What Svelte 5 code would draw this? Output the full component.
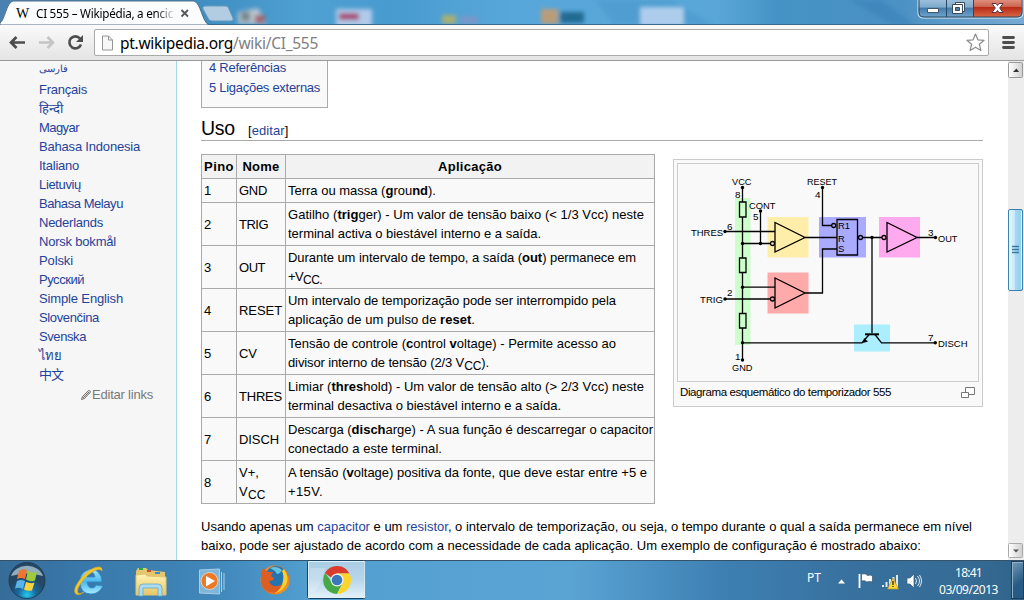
<script>
  // Spreads a run of text over a known width with letter spacing.
  function fit(node, width) {
    const natural = node.getBoundingClientRect().width;
    const count = [...node.textContent].length;
    node.style.letterSpacing = `${(width - natural) / count}px`;
  }

  const languages = [
    ['فارسی', 26], ['Français', 48], ['हिन्दी', 24], ['Magyar', 40],
    ['Bahasa Indonesia', 101], ['Italiano', 40], ['Lietuvių', 42],
    ['Bahasa Melayu', 84], ['Nederlands', 64], ['Norsk bokmål', 77],
    ['Polski', 34], ['Русский', 45], ['Simple English', 84],
    ['Slovenčina', 60], ['Svenska', 47], ['ไทย', 22], ['中文', 24]
  ];

  // Each line is [width, ...segments]; segments starting with * are bold, with _ are subscript.
  const rows = [
    ['1', ['GND'], [[148, 'Terra ou massa (', '*g', 'rou', '*nd', ').']]],
    ['2', ['TRIG'], [[356, 'Gatilho (', '*trig', 'ger) - Um valor de tensão baixo (< 1/3 Vcc) neste'], [253, 'terminal activa o biestável interno e a saída.']]],
    ['3', ['OUT'], [[348, 'Durante um intervalo de tempo, a saída (', '*out', ') permanece em'], [34, '+V', '_CC.']]],
    ['4', ['RESET'], [[328, 'Um intervalo de temporização pode ser interrompido pela'], [187, 'aplicação de um pulso de ', '*reset', '.']]],
    ['5', ['CV'], [[328, 'Tensão de controle (', '*c', 'ontrol ', '*v', 'oltage) - Permite acesso ao'], [201, 'divisor interno de tensão (2/3 V', '_CC', ').']]],
    ['6', ['THRES'], [[356, 'Limiar (', '*thres', 'hold) - Um valor de tensão alto (> 2/3 Vcc) neste'], [273, 'terminal desactiva o biestável interno e a saída.']]],
    ['7', ['DISCH'], [[365, 'Descarga (', '*disch', 'arge) - A sua função é descarregar o capacitor'], [154, 'conectado a este terminal.']]],
    ['8', ['V+,', 'V'], [[359, 'A tensão (', '*v', 'oltage) positiva da fonte, que deve estar entre +5 e'], [35, '+15V.']]]
  ];
  const nameWidths = { GND: 28, TRIG: 29, OUT: 26, RESET: 43, CV: 18, THRES: 43, DISCH: 40, 'V+,': 20, V: 9 };
</script>

<div class="screen">
  <header class="titlebar">
    <svg class="glass" width="1024" height="25">
      <defs>
        <linearGradient id="sky"><stop offset="0" stop-color="#4b81b0"/><stop offset=".18" stop-color="#3c8bc0"/><stop offset=".3" stop-color="#4fa0d3"/><stop offset=".38" stop-color="#489bcf"/><stop offset=".5" stop-color="#58a7da"/><stop offset=".7" stop-color="#5aa6d8"/><stop offset=".76" stop-color="#4593c6"/><stop offset=".88" stop-color="#4b91c4"/><stop offset="1" stop-color="#78aad2"/></linearGradient>
        <filter id="soft" x="-30%" y="-60%" width="160%" height="220%"><feGaussianBlur stdDeviation="2.2"/></filter>
      </defs>
      <rect width="1024" height="25" fill="url(#sky)"/>
      <path d="M595 0h75l45 25H615z" fill="#3f90c5" opacity=".35" filter="url(#soft)"/>
      <path d="M850 0h30l35 25h-22z" fill="#347fb6" opacity=".5" filter="url(#soft)"/>
      <g filter="url(#soft)">
        <path d="M238 12l20-4 9 16h-29z" fill="#b8c4cd"/><path d="M241 12h9v9h-9z" fill="#77858c"/><path d="M255 15h10v8h-10z" fill="#a16470"/>
        <path d="M336 9h36v18h-36z" fill="#b1cbe9"/><path d="M339 13h20v7h-20z" fill="#a64776"/>
        <path d="M442 15h14v9h-14z" fill="#a8af72"/><path d="M460 16h18v8h-18z" fill="#7798c9"/>
        <path d="M541 9h17v15h-17z" fill="#bb9c79"/><path d="M560 12h24v11h-24z" fill="#236b93"/>
        <path d="M640 7h44v19h-44z" fill="#aecdec"/>
      </g>
      <path d="M0 24.5h1024" stroke="#3c6685"/>
      <path d="M0 25V23C5 20 6 3 13 1h181c7 2 8 21 15 24z" fill="#fbfcfd" stroke="#526f87"/>
      <path d="M203 9q-1-3 3-3h20q2 0 3 3l4 9q1 3-2 3h-19q-3 0-4-3z" fill="#b2cce2" stroke="#6799be"/>
      <path d="M61.500 10l6.500 6.500m0-6.500l-6.500 6.500" transform="translate(120 0)" stroke="#555" stroke-width="1.8"/>
    </svg>
    <div class="tab"><span class="w">W</span><span class="tabtitle"><span class="run" use:fit={137}>CI 555 – Wikipédia, a encic</span></span></div>
    <svg class="windowbuttons" width="107" height="20">
      <defs>
        <linearGradient id="winblue" x2="0" y2="1"><stop stop-color="#a4c5df"/><stop offset=".46" stop-color="#7fa9ca"/><stop offset=".5" stop-color="#427bab"/><stop offset="1" stop-color="#74a8d0"/></linearGradient>
        <linearGradient id="winred" x2="0" y2="1"><stop stop-color="#e59a8c"/><stop offset=".45" stop-color="#cc6652"/><stop offset=".5" stop-color="#b92b17"/><stop offset="1" stop-color="#d86846"/></linearGradient>
      </defs>
      <path d="M1-2V13q0 5 5 5h95q5 0 5-5V-2z" fill="url(#winblue)" stroke="#dcecf6"/>
      <path d="M57-2H104V12q0 5-5 5H57z" fill="url(#winred)"/>
      <path d="M2-2V12q0 5 5 5h93q5 0 5-5V-2M29.5 0v17M56.5 0v17" fill="none" stroke="#29475f"/>
      <path d="M10.5 8.500h11v4h-11z" fill="#fff" stroke="#45566a"/>
      <path d="M38.500 2.500h9v9h-9z" fill="#fff" stroke="#39485a"/><path d="M35.500 4.500h10v9h-10z" fill="#fff" stroke="#39485a"/><path d="M38.500 7.500h4v3h-4z" fill="#507fab" stroke="#39485a"/>
      <path d="M75 3.500h4l1.500 2 1.500-2h4l-3.300 4.500 3.300 4.500h-4l-1.500-2-1.500 2h-4l3.300-4.500z" fill="#fff" stroke="#5a3540"/>
    </svg>
  </header>

  <nav class="toolbar">
    <svg class="nav" width="92" height="35">
      <path d="M16.5 12L11 17.5l5.500 5.500M11.500 17.500H25" fill="none" stroke="#4d4d4d" stroke-width="2.7"/>
      <path d="M47.500 12L53 17.500 47.500 23M39 17.500h13.500" fill="none" stroke="#c4c4c4" stroke-width="2.500"/>
      <path d="M80 13.500A6 6 0 1 0 81 19.500" fill="none" stroke="#4d4d4d" stroke-width="2.600"/><path d="M83 10v7h-7z" fill="#4d4d4d"/>
    </svg>
    <div class="address">
      <svg width="15" height="18"><path d="M2.500 2h6l4 4v10h-10zM8.500 2v4h4" fill="#f7f7f7" stroke="#949494"/></svg>
      <span class="url"><span class="run" use:fit={198}>pt.wikipedia.org<i>/wiki/CI_555</i></span></span>
      <svg class="star" width="21" height="21"><path d="M10.500 2l2.400 5.800 6.200.5-4.700 4 1.500 6.200-5.400-3.300-5.400 3.300 1.500-6.200-4.700-4 6.200-.5z" fill="#fff" stroke="#8b8b8b" stroke-width="1.200" stroke-linejoin="round"/></svg>
    </div>
    <svg class="menu" width="15" height="15"><path d="M2.500 2.500h10M2.500 7.500h10M2.500 12.500h10" stroke="#4e4e4e" stroke-width="2.800" stroke-linecap="round"/></svg>
  </nav>

  <main class="page">
    <aside>
      <ul>{#each languages as [name, width], i}<li class:persian={i === 0}><a><span class="run" use:fit={width}>{name}</span></a></li>{/each}</ul>
      <div class="editlinks"><svg width="12" height="12"><path d="M1.500 10.500L2.500 7.500 8.500 1.500Q10 1 10.500 3L4.500 9.500zM2.500 7.500l2 2M7.500 2.500l2 2M3.500 8.500l5-5" fill="#ddd" stroke="#777"/></svg><span class="run" use:fit={61}>Editar links</span></div>
    </aside>
    <article>
      <div class="toc"><a><span class="run" use:fit={77}>4 Referências</span></a><a><span class="run" use:fit={111}>5 Ligações externas</span></a></div>
      <h2><span class="run" use:fit={34}>Uso</span><small>[<a><span class="run" use:fit={33}>editar</span></a>]</small></h2>
      <div class="body">
        <table>
          <colgroup><col class="c1" /><col class="c2" /><col class="c3" /></colgroup>
          <thead><tr><th><span class="run" use:fit={30}>Pino</span></th><th><span class="run" use:fit={37}>Nome</span></th><th><span class="run" use:fit={64}>Aplicação</span></th></tr></thead>
          <tbody>
            {#each rows as [pin, names, lines]}
              <tr>
                <td>{pin}</td>
                <td>{#each names as name}<div class="line"><span class="run" use:fit={nameWidths[name]}>{name}</span>{#if name === 'V'}<sub>CC</sub>{/if}</div>{/each}</td>
                <td>{#each lines as [width, ...parts]}<div class="line"><span class="run" use:fit={width}>{#each parts as part}{#if part[0] === '*'}<b>{part.slice(1)}</b>{:else if part[0] === '_'}<sub>{part.slice(1)}</sub>{:else}{part}{/if}{/each}</span></div>{/each}</td>
              </tr>
            {/each}
          </tbody>
        </table>
        <figure>
          <svg class="schematic" width="302" height="219" viewBox="677 163 302 219">
            <rect x="677.5" y="163.500" width="301" height="218" fill="#f9f9f9" stroke="#ccc"/>
            <path d="M735 198h15.500v147H735z" fill="#cfc"/><path d="M767.500 217h41v40.500h-41z" fill="#fea"/><path d="M767.500 272.500h41v41h-41z" fill="#faa"/>
            <path d="M819 217h47v40.500h-47z" fill="#aaf"/><path d="M879 217h41v40.500h-41z" fill="#fae"/><path d="M854 324.500h36v27h-36z" fill="#aef"/>
            <g fill="none" stroke="#000" stroke-width="1.300">
              <path d="M742.500 187.500V202M742.500 217v41M742.500 272v41.500M742.500 328v32M739.500 202h6.500v15h-6.500zM739.500 258h6.500v14.500h-6.500zM739.500 313.500h6.500V328h-6.500z"/>
              <path d="M725 231.500h50M742.500 243.500h28M760.500 211v32.500M775 222.500v29.500l30-14.500zM805 237.500h32M742.500 287.200h32.500M725 299h45.500M775 278v30l30-15zM805 293h17.500v-44H837"/>
              <path d="M822.500 187.500v38h9M837 219.500h20.500V255H837zM863 237.500h19M887 222.500v29.500l30-14.500zM917 237.500h18.500M872 237.500V333M742.500 342.800H862l7-8M875 334.500l6.500 8.300h54"/>
              <circle cx="772.500" cy="243.500" r="2"/><circle cx="772.500" cy="299" r="2"/><circle cx="833.700" cy="225.500" r="2"/><circle cx="860.500" cy="237.500" r="2"/><circle cx="884" cy="237.500" r="2"/>
            </g>
            <path d="M865 334.300h14" stroke="#000" stroke-width="2"/><path d="M863 343l1-5 4 3.500z"/>
            {#each [[742.5,187.5],[760.5,211],[725,231.5],[742.5,243.5],[760.5,243.5],[822.5,187.5],[872,237.5],[935.5,237.5],[742.5,287.2],[725,299],[742.5,342.8],[742.5,360],[935.3,342.8]] as [x, y]}<circle cx={x} cy={y} r="1.700"/>{/each}
            {#each [['VCC',732,185,19.5],['8',735,197.5,5.5],['CONT',749,208.5,26.5],['5',753,220,5.5],['THRES',691,235.5,32],['6',727,229.5,5.5],['RESET',807,185,30],['4',815,197.5,5.5],['R1',838,229,12],['R',838,241.5,6.7],['S',838,252,6.3],['3',928,235.5,5.5],['OUT',938,241.5,19.5],['TRIG',700,302.5,23],['2',727,296,5.5],['1',735,359.5,5.5],['GND',732,371.3,20.5],['7',928,340.5,5.5],['DISCH',938,346.5,29.5]] as [label, x, y, width]}<text {x} {y} textLength={width} lengthAdjust="spacingAndGlyphs">{label}</text>{/each}
          </svg>
          <figcaption><span class="run" use:fit={211}>Diagrama esquemático do temporizador 555</span><svg width="15" height="12"><path d="M4.500 .5h9v7h-9z" fill="#fff" stroke="#777"/><path d="M.5 5.500h7v5h-7z" fill="#fff" stroke="#777"/></svg></figcaption>
        </figure>
      </div>
      <p><span class="run" use:fit={771}>Usando apenas um <a>capacitor</a> e um <a>resistor</a>, o intervalo de temporização, ou seja, o tempo durante o qual a saída permanece em nível</span><br /><span class="run" use:fit={720}>baixo, pode ser ajustado de acordo com a necessidade de cada aplicação. Um exemplo de configuração é mostrado abaixo:</span></p>
    </article>
    <div class="scroll">
      <svg width="16" height="499" viewBox="1008 61 16 499">
        <defs><linearGradient id="thumb"><stop stop-color="#e9f7fd"/><stop offset=".42" stop-color="#c9eafa"/><stop offset=".5" stop-color="#a3d9f3"/><stop offset="1" stop-color="#8dccec"/></linearGradient><linearGradient id="btn"><stop stop-color="#fff"/><stop offset="1" stop-color="#cfcfcf"/></linearGradient></defs>
        <rect x="1008" y="61" width="16" height="499" fill="#ededed"/>
        <rect x="1008.500" y="62.500" width="14" height="15" rx="1" fill="url(#btn)" stroke="#999"/><path d="M1013 72l3.500-3.500 2.500 3.500z" fill="#333"/>
        <rect x="1008.500" y="543.500" width="14" height="14" rx="1" fill="url(#btn)" stroke="#aaa"/><path d="M1013 549.500h6l-3 3z" fill="#555"/>
        <rect x="1008.500" y="209.500" width="14" height="81" rx="1.500" fill="url(#thumb)" stroke="#3b81ae"/><path d="M1009.500 211v78M1021.500 211v78" stroke="#e2f6ff"/>
        <path d="M1012 246.500h7M1012 249.500h7M1012 252.500h7" stroke="#36799c" stroke-width="1.500"/>
      </svg>
    </div>
  </main>

  <footer>
    <svg class="apps" width="400" height="40" viewBox="0 560 400 40">
      <defs>
        <radialGradient id="orb" cy=".9"><stop stop-color="#27c9ee"/><stop offset=".5" stop-color="#176a9f"/><stop offset="1" stop-color="#244863"/></radialGradient>
        <linearGradient id="ie" x2="0" y2="1"><stop stop-color="#a8e7ff"/><stop offset=".5" stop-color="#49b7ec"/><stop offset="1" stop-color="#a7eaff"/></linearGradient>
        <linearGradient id="folder" x2="0" y2="1"><stop stop-color="#fff3b3"/><stop offset="1" stop-color="#e8c668"/></linearGradient>
        <linearGradient id="fox" x2="1" y2="1"><stop stop-color="#f3a341"/><stop offset=".5" stop-color="#e4651d"/><stop offset="1" stop-color="#f6a823"/></linearGradient>
        <linearGradient id="active" x2="0" y2="1"><stop stop-color="#a9cde6"/><stop offset=".5" stop-color="#b7d6e9"/><stop offset="1" stop-color="#e4f2fa"/></linearGradient>
      </defs>
      <circle cx="27" cy="580.500" r="18" fill="url(#orb)" stroke="#233e54"/><path d="M11 576a16.500 13.500 0 0 1 32 0q-16-5-32 0z" fill="#cde2ee" opacity=".65"/>
      <path d="M19 571q4-3 8-.5l-2 8.500q-4-2-8 0z" fill="#ef762f"/><path d="M28 571q5 3 9 1l-2 8.500q-4 2-9-1z" fill="#9dcb3b"/><path d="M17 581q4-2 8 0l-2 8q-4-2-8-.5z" fill="#58b4eb"/><path d="M26 582q5 2 8.500.5l-2.500 8q-4 1-8-1z" fill="#fbd33e"/>
      <path fill-rule="evenodd" d="M103 586q-4 8-12 8-10 0-11-11-.5-9 6-12 7-4 12 1 4 4 4 10H87q1 6 5 6 3 0 4-3zM87 577h8q-1-5-4-5-3 0-4 5z" fill="url(#ie)" stroke="#2b8bc6" stroke-width=".8"/>
      <path d="M76 594q-4-3 3-13 7-10 15-13 9-3 8 3-2-3-8 0-8 4-13 12-5 7-3 10 2 2 6-1-5 4-8 2z" fill="#f5c72c" stroke="#dcaa21" stroke-width=".7"/>
      <path d="M136 571l2-3h8l2 2 17 2v22h-29z" fill="#e4c570"/><path d="M136 575l9-1 2 2 19 1v18h-30z" fill="url(#folder)" stroke="#e1c56f"/><path d="M139 569h4" stroke="#27a94d" stroke-width="2"/><path d="M147 571h4" stroke="#d2492c" stroke-width="2"/><path d="M155 573h5" stroke="#3790cb" stroke-width="2"/>
      <path d="M139 596v-8q0-4 4-4h15q4 0 4 4v8h-4v-8h-15v8z" fill="#a9dbf1" stroke="#68a8c7" stroke-width=".8"/>
      <path d="M199.500 570l20-1v25l-20-1z" fill="#80b6da" stroke="#a6cfe5"/><path d="M221.500 572v20M224 573v17" stroke="#a8d3eb"/><circle cx="209.500" cy="581" r="8.500" fill="#ee7824" stroke="#d7d7c9"/><path d="M206 576l9 5-9 5.500z" fill="#fff"/>
      <circle cx="275" cy="580" r="14.500" fill="url(#fox)"/><circle cx="276" cy="576.500" r="10.500" fill="#2573af"/><path d="M270 568q7-3 12 2-2 4-5 4l-2-3z" fill="#66c3dd"/><path d="M284 569q6 8 2 16-5 8-13 8 9-4 10-12 1-6-1-10z" fill="#f7cf32"/><path d="M261 573l2-5 5 4 5 0-2 4 3 2q0 3-5 3 2 6 8 5 3 0 5-2-2 7-8 9-9-1-13-9z" fill="#dc5e22"/>
      <rect x="307.500" y="560.500" width="58" height="38" rx="2" fill="url(#active)" stroke="#194366"/><path d="M308.500 598V561.500H365v36h-56.500" fill="none" stroke="#e1f0f8"/><path d="M314 592q7-5 11-24h-15v24z" fill="#fff" opacity=".2"/>
      <path d="M324.900 573A14 14 0 0 1 349.500 573.500H337l-6 4z" fill="#d93b2d"/><path d="M325 573a14 14 0 0 0 12 21l5-10-7 2z" fill="#46a846"/><path d="M337 573.500h12.500A14 14 0 0 1 337 594l6-11z" fill="#fbd52d"/><circle cx="337" cy="580" r="6.500" fill="#f6f6ee"/><circle cx="337" cy="580" r="5.300" fill="#3979bb"/>
    </svg>
    <div class="tray">
      <span class="pt"><span class="run" use:fit={14}>PT</span></span>
      <svg width="94" height="40" viewBox="832 560 94 40">
        <path d="M838 583.500l3.500-4 3.500 4z" fill="#fff"/>
        <path d="M859.500 574v14" stroke="#fff" stroke-width="1.800"/><path d="M861.500 574q5-1 6 1.500 3-1 5 .5v6q-3-1-6 0-1-2-5-1z" fill="#fff" stroke="#34536b" stroke-width=".7"/>
        <path d="M883 587v-2M886.500 587v-5M890 587v-8M893.500 587v-10M897 587v-12" stroke="#dae9f2" stroke-width="2"/><path d="M893 578l5.500 11h-11z" fill="#ffd93c" stroke="#b99720" stroke-width=".7"/><path d="M893 581v4m0 1v1" stroke="#222" stroke-width="1.300"/>
        <path d="M907 578h3l4-4v14l-4-4h-3z" fill="#fff" stroke="#3b5b72" stroke-width=".7"/><path d="M915.500 578q2 3 0 6M917.500 576q4 5 0 10M919.500 575q4 6 0 12" stroke="#dceaf2" fill="none"/>
      </svg>
      <div class="clock"><span class="run" use:fit={27}>18:41</span><span class="run" use:fit={59}>03/09/2013</span></div>
      <div class="peek"></div>
    </div>
  </footer>
</div>

<style>
  :global(body) { margin: 0; overflow: hidden; }
  * { box-sizing: border-box; }
  svg { display: block; flex: none; }
  .screen { width: 1024px; height: 600px; display: flex; flex-direction: column; overflow: hidden; position: relative; background: #fff; font: 13px/19px "Liberation Sans", "Noto Sans CJK SC", sans-serif; color: #000; }
  .run { display: inline-block; white-space: pre; }
  .titlebar { height: 25px; flex: none; position: relative; }
  .glass { position: absolute; inset: 0; }
  .tab { position: relative; display: flex; padding: 4px 0 0 16px; font: 11.700px/18px "Noto Sans", sans-serif; }
  .w { width: 20px; font: 14px/19px "Liberation Serif", serif; }
  .tabtitle { width: 140px; mask-image: linear-gradient(90deg, #000 120px, transparent 140px); }
  .windowbuttons { position: absolute; top: 0; right: 0; }
  .toolbar { height: 36px; flex: none; display: flex; align-items: flex-start; background: linear-gradient(#fafafa, #e4e4e4); border-bottom: 1px solid #999; }
  .nav { width: 94px; }
  .address { width: 895px; height: 27px; margin-top: 4px; border: 1px solid #aaa; border-radius: 2px; background: #fff; display: flex; align-items: center; padding: 0 1px 0 5px; }
  .url { flex: 1; padding-left: 5px; font: 15.500px/24px "Noto Sans", sans-serif; }
  .url i { font-style: normal; color: #808080; }
  .star { margin-right: 1px; }
  .menu { margin: 10px 0 0 12px; }
  .page { height: 499px; flex: none; display: flex; overflow: hidden; }
  a { color: #1f439b; }
  aside { width: 177px; flex: none; background: #f6f6f6; border-right: 1px solid #a7d7e8; }
  ul { list-style: none; margin: 0; padding: 0 0 0 39px; }
  li { height: 19px; line-height: 19px; white-space: nowrap; }
  li a { display: block; height: 19px; }
  .persian { font-size: 9.500px; line-height: 16px; }
  .editlinks { display: flex; align-items: center; padding-left: 80px; height: 19px; margin-top: 1px; color: #797979; }
  article { width: 831px; flex: none; padding-left: 24px; }
  .toc { width: 127px; height: 47px; border: 1px solid #aaa; border-top: 0; background: #f9f9f9; padding: 0 0 0 7px; line-height: 20px; display: flex; flex-direction: column; justify-content: flex-start; }
  .toc a { height: 20px; margin-top: -3px; } .toc a + a { margin-top: 0; }
  h2 { width: 782px; height: 26px; margin: 7px 0 13px; border-bottom: 1px solid #aaa; font: 19.500px/26px "Liberation Sans", sans-serif; display: flex; align-items: baseline; }
  small { font-size: 13px; line-height: 20px; margin-left: 13px; }
  .body { display: flex; align-items: flex-start; justify-content: space-between; width: 782px; }
  table { width: 454px; flex: none; table-layout: fixed; border-collapse: collapse; background: #f9f9f9; }
  .c1 { width: 35px; } .c2 { width: 49px; } .c3 { width: 369px; }
  th, td { border: 1px solid #aaa; padding: 2px; text-align: left; white-space: nowrap; line-height: 19px; }
  th { background: #f2f2f2; text-align: center; }
  .line { height: 19px; }
  sub { font-size: 12px; line-height: 0; vertical-align: -3px; }
  figure { margin: 5px 0 0; width: 310px; height: 248px; background: #f9f9f9; border: 1px solid #ccc; padding: 3px; }
  .schematic text { font-size: 9.500px; }
  figcaption { display: flex; justify-content: space-between; align-items: center; padding: 1px 3px 0; font-size: 11.500px; }
  p { margin: 13px 0 0; }
  .scroll { width: 16px; flex: none; }
  footer { height: 40px; flex: none; display: flex; justify-content: space-between; color: #fff; background: linear-gradient(90deg, #366c98 0, #3978aa 80px, #4188bb 220px, #529fd0 310px, #5aa4d4 570px, #3e80b3 720px, #38719f 850px, #356b94 970px, #306389); box-shadow: inset 0 1px #35526b; }
  .tray { width: 217px; display: flex; font: 12px/17px "Noto Sans", sans-serif; }
  .pt { width: 25px; padding-top: 9px; }
  .clock { width: 85px; display: flex; flex-direction: column; align-items: center; padding: 4px 0 0; }
  .peek { width: 13px; height: 38px; margin-top: 1px; border: 1px solid #203e57; box-shadow: inset 1px 1px #8eb2cc; background: linear-gradient(145deg, #7298b6, #285b83 60%); }
</style>
